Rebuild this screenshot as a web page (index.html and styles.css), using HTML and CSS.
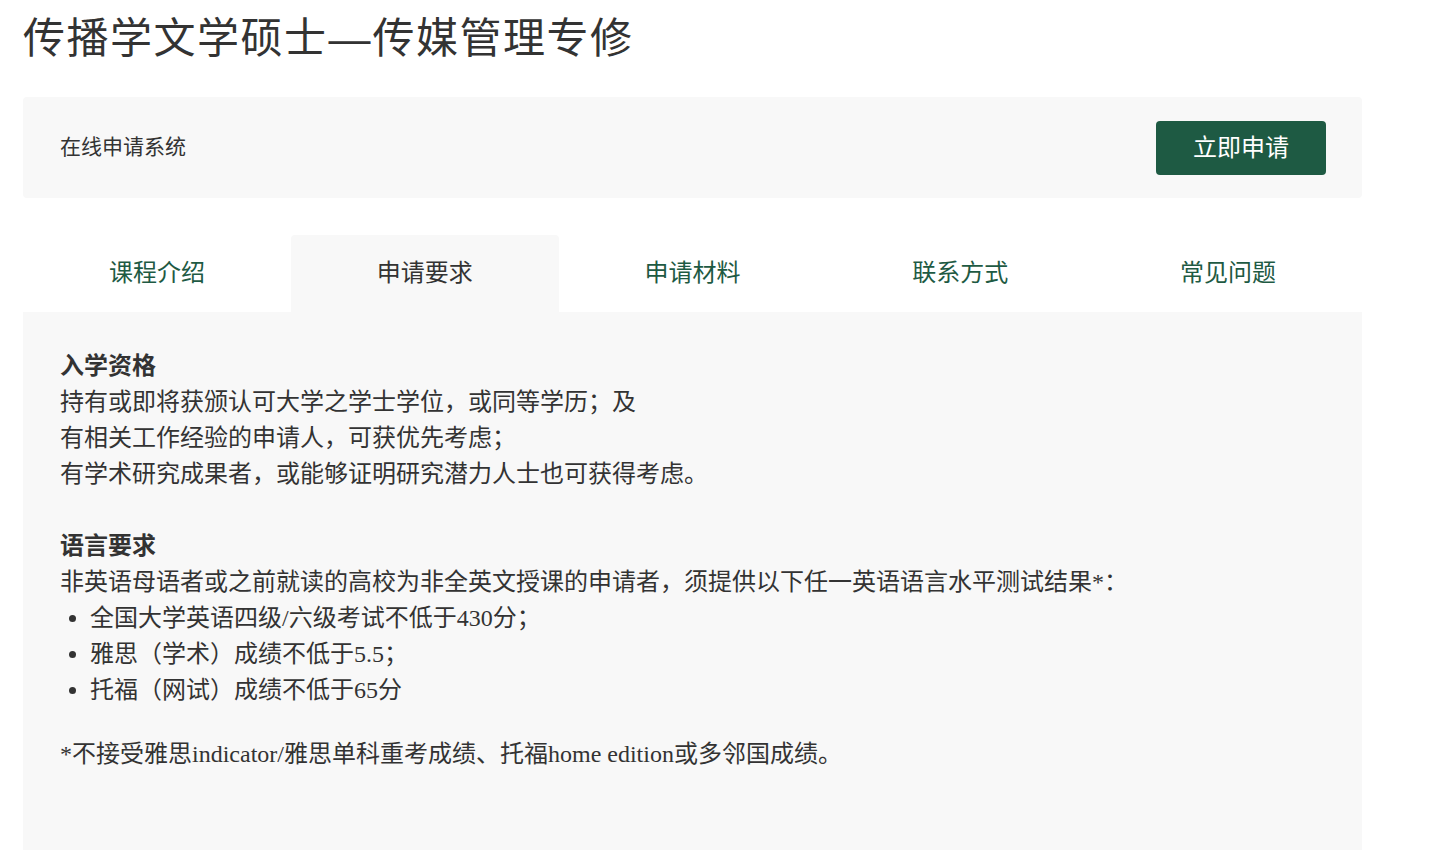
FILE: index.html
```html
<!DOCTYPE html>
<html lang="zh-CN">
<head>
  <meta charset="UTF-8">
  <title>传播学文学硕士—传媒管理专修</title>
  <link rel="stylesheet" href="styles.css">
</head>
<body>
  <div class="page">
    <h1 class="title">传播学文学硕士<span class="dash">—</span>传媒管理专修</h1>

    <div class="apply-box">
      <span class="apply-label">在线申请系统</span>
      <a class="apply-btn" href="#">立即申请</a>
    </div>

    <div class="tabs">
      <div class="tab">课程介绍</div>
      <div class="tab active">申请要求</div>
      <div class="tab">申请材料</div>
      <div class="tab">联系方式</div>
      <div class="tab">常见问题</div>
    </div>

    <div class="tab-panel">
      <h3>入学资格</h3>
      <p class="block">持有或即将获颁认可大学之学士学位，或同等学历；及<br>
      有相关工作经验的申请人，可获优先考虑；<br>
      有学术研究成果者，或能够证明研究潜力人士也可获得考虑。</p>

      <h3>语言要求</h3>
      <p>非英语母语者或之前就读的高校为非全英文授课的申请者，须提供以下任一英语语言水平测试结果*：</p>
      <ul>
        <li>全国大学英语四级/六级考试不低于430分；</li>
        <li>雅思（学术）成绩不低于5.5；</li>
        <li>托福（网试）成绩不低于65分</li>
      </ul>
      <p>*不接受雅思indicator/雅思单科重考成绩、托福home edition或多邻国成绩。</p>
    </div>
  </div>
</body>
</html>
```

FILE: styles.css
```css
body {
  margin: 0;
  font-family: "Liberation Serif", "Noto Sans CJK SC", serif;
  color: #333;
  background: #fff;
}
.page {
  width: 1339px;
  padding: 0 23px;
}
.title {
  margin: 0;
  padding-top: 10px;
  height: 87px;
  font-family: "Noto Sans CJK SC", sans-serif;
  font-size: 42px;
  font-weight: normal;
  line-height: 50px;
  letter-spacing: 1.5px;
}
.title .dash {
  font-family: "Liberation Sans", sans-serif;
  letter-spacing: 2px;
  margin-left: 1px;
}
.apply-box {
  display: flex;
  justify-content: space-between;
  align-items: center;
  height: 101px;
  padding: 0 36px 0 37px;
  background-color: #f8f8f8;
  border-radius: 4px;
}
.apply-label {
  font-size: 21px;
  padding-bottom: 5px;
}
.apply-btn {
  display: flex;
  align-items: center;
  justify-content: center;
  width: 170px;
  height: 50px;
  padding-bottom: 4px;
  background-color: #1e5a43;
  color: #fff;
  border-radius: 4px;
  font-size: 24px;
  text-decoration: none;
}
.tabs {
  display: flex;
  margin-top: 37px;
}
.tab {
  flex: 1;
  height: 71px;
  padding-bottom: 6px;
  display: flex;
  align-items: center;
  justify-content: center;
  font-size: 24px;
  color: #1e5a43;
  border-radius: 4px 4px 0 0;
}
.tab.active {
  background-color: #f8f8f8;
  color: #333;
}
.tab-panel {
  background-color: #f8f8f8;
  padding: 36px 37px 80px;
  font-size: 24px;
  line-height: 36px;
  min-height: 420px;
}
.tab-panel h3 {
  margin: 0;
  font-size: 24px;
  font-weight: bold;
}
.tab-panel p {
  margin: 0;
}
.tab-panel p.block {
  margin-bottom: 36px;
}
.tab-panel ul {
  margin: 0 0 28px;
  padding-left: 30px;
}
```
